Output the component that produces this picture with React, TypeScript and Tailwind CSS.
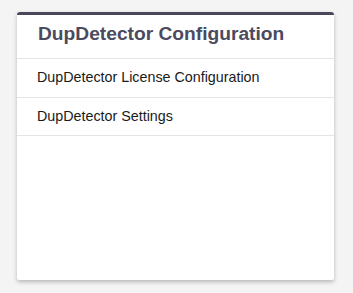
import React from 'react';

const items = ['DupDetector License Configuration', 'DupDetector Settings'];

const App: React.FC = () => {
  return (
    <div className="min-h-screen bg-[#f4f4f4] pt-[12px] pl-[17px] font-['Liberation_Sans',Arial,sans-serif]">
      <div className="w-[317px] h-[268px] bg-white border-t-[3px] border-[#4a4858] rounded-t-[3px] rounded-b-[2px] shadow-[0_2px_4px_rgba(0,0,0,0.25)]">
        <div className="h-[44px] pt-[9px] px-[21px] border-b border-[#e4e4e4]">
          <h1 className="text-[19.2px] font-bold text-[#4b4a5e] leading-none">DupDetector Configuration</h1>
        </div>
        {items.map((item) => (
          <div key={item} className="h-[38.5px] flex items-center px-[20px] border-b border-[#e4e4e4] text-[14.3px] text-[#1a1a1a]">
            {item}
          </div>
        ))}
      </div>
    </div>
  );
};

export default App;
